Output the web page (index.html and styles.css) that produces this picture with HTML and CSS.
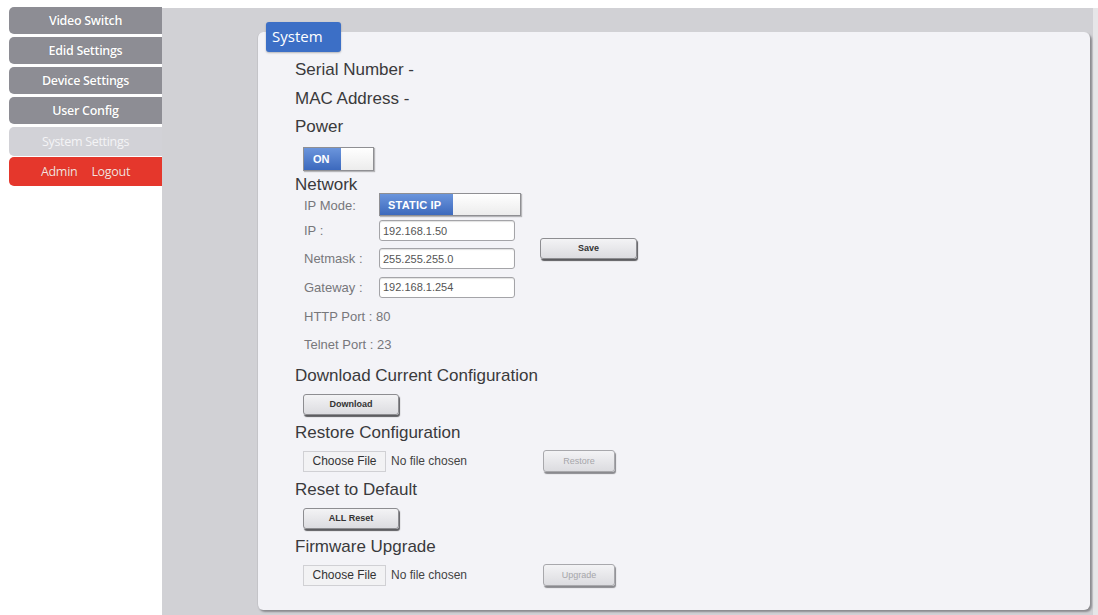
FILE: index.html
```html
<!DOCTYPE html>
<html>
<head>
<meta charset="utf-8">
<title>System Settings</title>
<link rel="stylesheet" href="styles.css">
</head>
<body>
<div class="page">
  <nav class="sidebar">
    <div class="nav-item">Video Switch</div>
    <div class="nav-item">Edid Settings</div>
    <div class="nav-item">Device Settings</div>
    <div class="nav-item">User Config</div>
    <div class="nav-item active">System Settings</div>
    <div class="nav-item logout"><span>Admin</span><span>Logout</span></div>
  </nav>
  <main class="main">
    <section class="panel">
      <div class="tab">System</div>
      <div class="line">Serial Number -</div>
      <div class="line">MAC Address -</div>
      <div class="line">Power</div>
      <div class="toggle power"><span class="on">ON</span><span class="off"></span></div>
      <div class="heading net-heading">Network</div>
      <div class="net-grid">
        <div class="lbl">IP Mode:</div>
        <div class="toggle ipmode"><span class="on">STATIC IP</span><span class="off"></span></div>
        <div class="lbl">IP :</div>
        <input class="field" type="text" value="192.168.1.50">
        <div class="lbl">Netmask :</div>
        <input class="field" type="text" value="255.255.255.0">
        <div class="lbl">Gateway :</div>
        <input class="field" type="text" value="192.168.1.254">
        <button class="btn save">Save</button>
        <div class="lbl wide">HTTP Port : 80</div>
        <div class="lbl wide">Telnet Port : 23</div>
      </div>
      <div class="heading">Download Current Configuration</div>
      <div class="row"><button class="btn">Download</button></div>
      <div class="heading">Restore Configuration</div>
      <div class="row file-row">
        <span class="choose">Choose File</span><span class="nofile">No file chosen</span>
        <button class="btn small disabled">Restore</button>
      </div>
      <div class="heading">Reset to Default</div>
      <div class="row"><button class="btn">ALL Reset</button></div>
      <div class="heading">Firmware Upgrade</div>
      <div class="row file-row">
        <span class="choose">Choose File</span><span class="nofile">No file chosen</span>
        <button class="btn small disabled">Upgrade</button>
      </div>
    </section>
  </main>
</div>
</body>
</html>
```

FILE: styles.css
```css
html, body {
  margin: 0;
  padding: 0;
  background: #ffffff;
  height: 100%;
}

.page {
  display: flex;
  height: 615px;
  overflow: hidden;
}

.sidebar {
  width: 153px;
  padding: 7px 0 0 9px;
  flex: none;
}

.nav-item {
  height: 27px;
  margin-bottom: 3px;
  display: flex;
  align-items: center;
  justify-content: center;
  gap: 14px;
  background: #8d8d94;
  color: #ffffff;
  border-radius: 5px 0 0 5px;
  font-family: "Open Sans", "Liberation Sans", sans-serif;
  font-weight: 600;
  font-size: 12.5px;
  letter-spacing: -0.3px;
  text-shadow: 0 0 1px rgba(0, 0, 0, 0.2);
}

.nav-item.active {
  background: #d2d2d7;
  color: #f4f4f6;
  font-weight: 400;
  text-shadow: none;
  height: 29px;
  margin-bottom: 1px;
}

.nav-item.logout {
  background: #e5372c;
  color: #fbe0de;
  font-weight: 400;
  height: 29px;
}

.main {
  flex: 1;
  margin-top: 8px;
  background: #d1d1d5;
  border-right: 5px solid #e6e6e8;
  padding: 24px 3px 5px 95px;
  display: flex;
}

.panel {
  position: relative;
  flex: 1;
  background: #f3f3f7;
  border-radius: 6px;
  border-left: 1px solid #c4c4c8;
  box-shadow: 2px 2px 2px #8b8b8f;
  padding: 24px 0 0 37px;
  font-family: "Liberation Sans", Arial, sans-serif;
  color: #3a3a3c;
}

.tab {
  position: absolute;
  top: -10px;
  left: 8px;
  width: 75px;
  height: 30px;
  box-sizing: border-box;
  background: #3c6fc6;
  color: #ffffff;
  border-radius: 3px;
  font-family: "Open Sans", "Liberation Sans", sans-serif;
  font-size: 15px;
  line-height: 29px;
  padding-left: 6px;
  box-shadow: 0 1px 2px rgba(0, 0, 0, 0.25);
}

.line {
  font-size: 17px;
  line-height: 28.5px;
  height: 28.5px;
}

.heading {
  font-size: 17px;
  line-height: 22px;
  margin-top: 7px;
}

.net-heading {
  margin-top: 4px;
  line-height: 20px;
}

.toggle {
  display: flex;
  margin-left: 8px;
  border: 1px solid #8f8f93;
  box-sizing: border-box;
  box-shadow: 1px 1px 1px rgba(0, 0, 0, 0.25);
  background: linear-gradient(#ffffff, #ececec);
}

.toggle .on {
  display: flex;
  align-items: center;
  background: linear-gradient(#6b95dc, #3c69bd);
  color: #ffffff;
  font-weight: bold;
  font-size: 11px;
}

.toggle.power {
  width: 71px;
  height: 24px;
  margin-top: 5px;
}

.toggle.power .on {
  width: 37px;
  padding-left: 9px;
  box-sizing: border-box;
}

.toggle.ipmode {
  width: 142px;
  height: 23px;
  margin-left: 0;
  margin-top: -1px;
}

.toggle.ipmode .on {
  width: 73px;
  padding-left: 8px;
  box-sizing: border-box;
  font-size: 11px;
  letter-spacing: 0.2px;
}

.net-grid {
  display: grid;
  grid-template-columns: 75px 136px auto;
  grid-template-rows: 23px 28px 28px 29px 29px 27px;
  margin-left: 9px;
  margin-top: -1px;
  align-items: center;
}

.lbl {
  grid-column: 1;
  font-size: 13px;
  color: #77777b;
}

.lbl.wide {
  grid-column: 1 / 3;
}

.field {
  grid-column: 2;
  width: 136px;
  height: 21px;
  box-sizing: border-box;
  border: 1px solid #a4a4a8;
  border-radius: 3px;
  background: #ffffff;
  font-family: "Liberation Sans", Arial, sans-serif;
  font-size: 11px;
  color: #555;
  padding: 0 3px;
  box-shadow: inset 0 1px 1px rgba(0, 0, 0, 0.12);
}

.btn {
  width: 96px;
  height: 21px;
  box-sizing: border-box;
  border: 1px solid #8d8d91;
  border-radius: 3px;
  background: linear-gradient(#f3f3f5, #dcdce0);
  box-shadow: 1px 2px 1px #5d5d60;
  font-family: "Liberation Sans", Arial, sans-serif;
  font-weight: bold;
  font-size: 9px;
  color: #333;
  padding: 0;
}

.save {
  grid-column: 3;
  grid-row: 2 / 5;
  align-self: start;
  margin-top: 21px;
  margin-left: 25px;
  width: 97px;
}

.row {
  margin-top: 7px;
  margin-left: 8px;
  display: flex;
  align-items: center;
  height: 21px;
}

.file-row {
  font-size: 12px;
}

.choose {
  width: 83px;
  height: 21px;
  box-sizing: border-box;
  display: flex;
  align-items: center;
  justify-content: center;
  background: #f2f2f4;
  border: 1px solid #d0d0d4;
  color: #333;
}

.nofile {
  margin-left: 5px;
  width: 152px;
  color: #444;
}

.btn.small {
  width: 72px;
  height: 22px;
  font-weight: normal;
  font-size: 9px;
  box-shadow: 1px 2px 1px #8a8a8e;
  border-color: #a8a8ac;
}

.btn.disabled {
  color: #a6a6aa;
}
```
